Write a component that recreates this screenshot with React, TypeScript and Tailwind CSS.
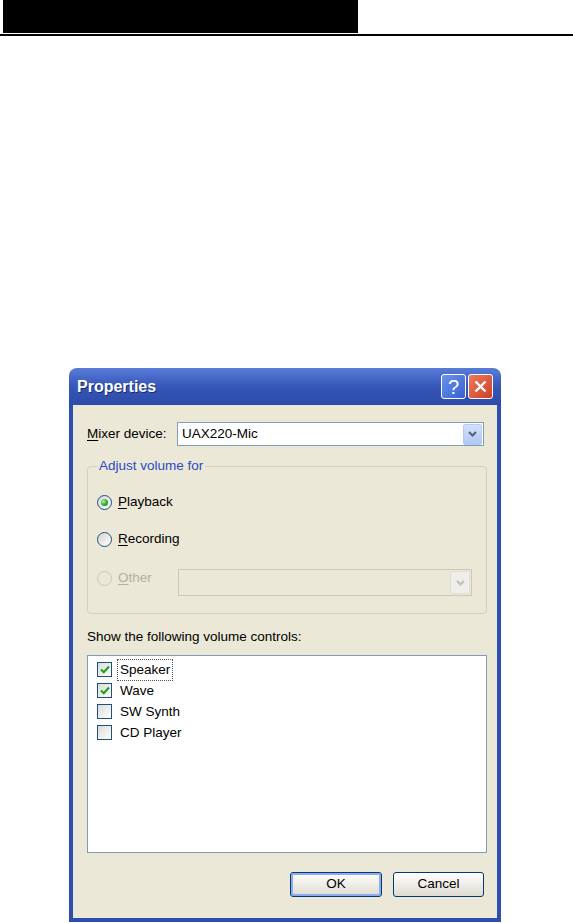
import React from 'react';

const font = "font-['Liberation_Sans',Arial,sans-serif]";

const Chevron: React.FC<{ color: string }> = ({ color }) => (
  <svg width="9" height="6" viewBox="0 0 9 6">
    <path d="M1 1 L4.5 4.5 L8 1" fill="none" stroke={color} strokeWidth="2" />
  </svg>
);

const Radio: React.FC<{ checked?: boolean; disabled?: boolean }> = ({ checked, disabled }) => (
  <span
    className={`flex h-[15px] w-[15px] shrink-0 items-center justify-center rounded-full border ${
      disabled ? 'border-[#cac8bb]' : 'border-[#1c5180] bg-linear-to-br from-[#d6d5cd] to-white'
    }`}
  >
    {checked && (
      <span className="h-[7px] w-[7px] rounded-full bg-[radial-gradient(circle_at_35%_35%,#b4f0a8,#2aa82a_55%,#1a8a1a)]" />
    )}
  </span>
);

const Check: React.FC<{ checked?: boolean }> = ({ checked }) => (
  <span className="flex h-[15px] w-[15px] shrink-0 items-center justify-center border border-[#1c5180] bg-linear-to-br from-[#dcdbd5] to-white">
    {checked && (
      <svg width="10" height="9" viewBox="0 0 10 9">
        <path d="M1 4.5 L3.8 7.2 L9 1.5" fill="none" stroke="#21a121" strokeWidth="2.2" />
      </svg>
    )}
  </span>
);

const items = [
  { name: 'Speaker', checked: true, focus: true },
  { name: 'Wave', checked: true },
  { name: 'SW Synth', checked: false },
  { name: 'CD Player', checked: false },
];

const App: React.FC = () => {
  return (
    <div className={`min-h-screen bg-white ${font} text-[13.5px] text-black`}>
      {/* page header */}
      <div className="ml-[3px] h-[33px] w-[355px] bg-black" />
      <div className="mt-[1px] h-[2px] w-full bg-black" />

      {/* dialog */}
      <div className="ml-[69px] mt-[332px] w-[432px]">
        <div className="flex h-[37px] items-center justify-between rounded-t-[8px] bg-linear-to-b from-[#5a7cd8] via-[#3656b8] to-[#2c4aa9] pl-[8px] pr-[8px]">
          <span className="text-[16px] font-bold text-white [text-shadow:1px_1px_0_#1a2b70]">Properties</span>
          <div className="flex gap-[2px]">
            <div className="flex h-[25px] w-[25px] items-center justify-center rounded-[3px] border border-white bg-linear-to-br from-[#6d92ea] to-[#3561d2] text-[20px] leading-none text-white">
              ?
            </div>
            <div className="flex h-[25px] w-[25px] items-center justify-center rounded-[3px] border border-white bg-linear-to-br from-[#ea7a5e] to-[#cf3e1f]">
              <svg width="13" height="13" viewBox="0 0 13 13">
                <path d="M1.5 1.5 L11.5 11.5 M11.5 1.5 L1.5 11.5" stroke="white" strokeWidth="2.4" />
              </svg>
            </div>
          </div>
        </div>

        <div className="border-x-4 border-b-4 border-[#2d4db1] bg-[#ebe8d7] pb-[21px] pl-[14px] pr-[10px] pt-[17px]">
          {/* mixer device */}
          <div className="flex h-[24px] items-center">
            <span className="w-[90px]">
              <span className="underline underline-offset-2">M</span>ixer device:
            </span>
            <div className="mr-[3px] flex h-[24px] flex-1 items-center border border-[#7f9db9] bg-white pl-[4px]">
              <span className="flex-1">UAX220-Mic</span>
              <div className="mr-[1px] flex h-[21px] w-[19px] items-center justify-center rounded-[2px] border border-[#b6c8f3] bg-linear-to-b from-[#d4e1fc] to-[#b3c7f5]">
                <Chevron color="#4d6185" />
              </div>
            </div>
          </div>

          {/* group box */}
          <div className="relative mt-[20px] h-[148px] rounded-[4px] border border-[#d0d0bf] pl-[9px] pt-[25px]">
            <span className="absolute -top-[9px] left-[9px] bg-[#ebe8d7] px-[2px] leading-[16px] text-[#2a4bc7]">
              Adjust volume for
            </span>
            <div className="flex h-[20px] items-center gap-[6px]">
              <Radio checked />
              <span>
                <span className="underline underline-offset-2">P</span>layback
              </span>
            </div>
            <div className="mt-[17px] flex h-[20px] items-center gap-[6px]">
              <Radio />
              <span>
                <span className="underline underline-offset-2">R</span>ecording
              </span>
            </div>
            <div className="mt-[20px] flex items-start">
              <div className="flex h-[18px] w-[81px] items-center gap-[6px] text-[#b3b09f]">
                <Radio disabled />
                <span>
                  <span className="underline underline-offset-2">O</span>ther
                </span>
              </div>
              <div className="flex h-[27px] w-[294px] items-center justify-end border border-[#cbc8b9] bg-[#ebe8d7] pr-[1px]">
                <div className="flex h-[23px] w-[20px] items-center justify-center rounded-[2px] border border-[#e0dfd6] bg-[#efeee8]">
                  <Chevron color="#c0bfb6" />
                </div>
              </div>
            </div>
          </div>

          <div className="mt-[15px] leading-[16px]">Show the following volume controls:</div>

          {/* list box */}
          <div className="mt-[10px] h-[198px] border border-[#7f9db9] bg-white pl-[9px] pt-[3px]">
            {items.map((it) => (
              <div key={it.name} className="flex h-[21px] items-center">
                <Check checked={it.checked} />
                <span
                  className={`ml-[5px] px-[2px] leading-[20px] ${
                    it.focus ? 'border border-dotted border-[#555]' : 'border border-transparent'
                  }`}
                >
                  {it.name}
                </span>
              </div>
            ))}
          </div>

          {/* buttons */}
          <div className="mr-[3px] mt-[19px] flex justify-end gap-[11px]">
            <button className="flex h-[25px] w-[92px] items-center justify-center rounded-[3px] border border-[#003c74] bg-linear-to-b from-white to-[#dedbd0] shadow-[inset_0_0_0_2px_#8eaaf0]">
              OK
            </button>
            <button className="flex h-[25px] w-[91px] items-center justify-center rounded-[3px] border border-[#003c74] bg-linear-to-b from-white to-[#dedbd0]">
              Cancel
            </button>
          </div>
        </div>
      </div>
    </div>
  );
};

export default App;
